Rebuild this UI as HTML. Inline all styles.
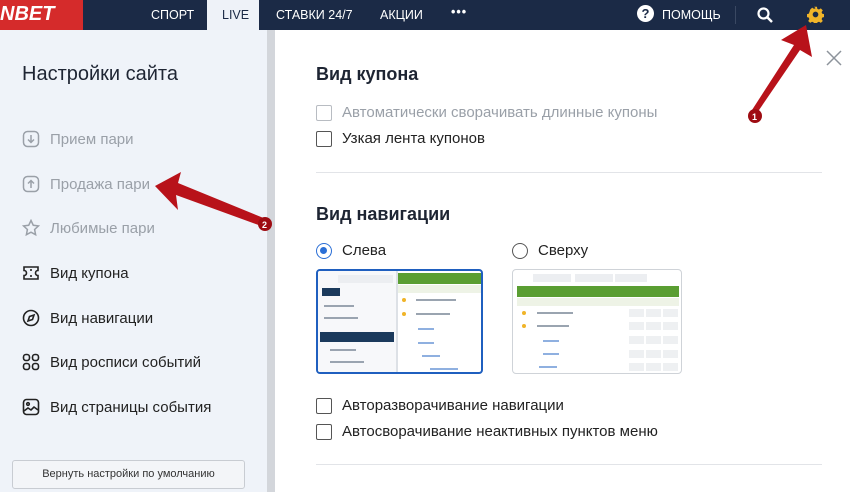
<!DOCTYPE html>
<html><head><meta charset="utf-8"><style>
*{margin:0;padding:0;box-sizing:border-box}
body{width:850px;height:492px;overflow:hidden;font-family:"Liberation Sans",sans-serif;background:#fff;position:relative}
.nav{position:absolute;left:0;top:0;width:850px;height:30px;background:#1b2a46;color:#fff;font-size:12.5px}
.nav span{position:absolute;top:8px}
.logo{position:absolute;left:0;top:0;width:83px;height:30px;background:#d52b2b;color:#fff;font-weight:bold;font-style:italic;font-size:20px;padding:3px 0 0 0}
.live{position:absolute;left:207px;top:0;width:52px;height:31px;background:#eef2f8;color:#1b2a46}
.left{position:absolute;left:0;top:30px;width:267px;height:462px;background:#eff3f9}
.sep{position:absolute;left:267px;top:30px;width:8px;height:462px;background:#d3d6db}
.item{position:absolute;left:22px;font-size:15px;color:#222;display:flex;align-items:center}
.item svg{margin-right:10px}
.dim{color:#9aa0a8}
.h{position:absolute;left:316px;font-size:18px;font-weight:bold;color:#1e2533}
.cb{position:absolute;left:316px;font-size:15px;color:#222;display:flex;align-items:center}
.cb i{display:inline-block;width:16px;height:16px;border:1.5px solid #555;border-radius:2px;margin-right:10px}
.hr{position:absolute;left:316px;width:506px;height:1px;background:#e2e4e8}
.rad{position:absolute;font-size:15px;color:#222;display:flex;align-items:center}
.rad i{display:inline-block;width:16px;height:16px;border-radius:50%;border:1.5px solid #555;margin-right:10px;position:relative}
.prev{position:absolute;background:#fff;border-radius:4px;overflow:hidden}
.prev b{position:absolute;display:block}
.ln{height:2px;background:#9aa4b0}
.bl{height:2px;background:#8fb0e0}
.dt{width:4px;height:4px;border-radius:50%;background:#f0b429}
.od{width:15px;height:8px;background:#eef0f2}
</style></head><body>
<div class="nav">
<div class="logo">NBET</div>
<span style="left:151px">СПОРТ</span>
<div class="live"><span style="left:15px;top:8px">LIVE</span></div>
<span style="left:276px">СТАВКИ 24/7</span>
<span style="left:380px">АКЦИИ</span>
<span style="left:451px;top:5px;font-weight:bold;letter-spacing:1px">•••</span>
<span style="left:637px;top:5px;width:17px;height:17px;border-radius:50%;background:#fff;color:#1b2a46;font-weight:bold;text-align:center;line-height:17px;font-size:13px">?</span>
<span style="left:662px">ПОМОЩЬ</span>
<div style="position:absolute;left:735px;top:6px;width:1px;height:18px;background:#3a4862"></div>
<svg style="position:absolute;left:756px;top:6px" width="18" height="18" viewBox="0 0 18 18"><circle cx="7.5" cy="7.5" r="5" fill="none" stroke="#fff" stroke-width="2.2"/><path d="M11 11l5 5" stroke="#fff" stroke-width="2.5"/></svg>
<svg style="position:absolute;left:807px;top:6px" width="17" height="17" viewBox="0 0 24 24"><path fill="#f0b429" d="M10 1h4l.6 3 2.3 1 2.6-1.7 2.8 2.8-1.7 2.6 1 2.3 3 .6v4l-3 .6-1 2.3 1.7 2.6-2.8 2.8-2.6-1.7-2.3 1-.6 3h-4l-.6-3-2.3-1-2.6 1.7-2.8-2.8 1.7-2.6-1-2.3-3-.6v-4l3-.6 1-2.3L4.5 5.1l2.8-2.8 2.6 1.7 2.3-1z"/><circle cx="12" cy="12" r="4" fill="#1b2a46"/></svg>
</div>
<div class="left">
<div style="position:absolute;left:22px;top:33px;font-size:20px;color:#1e2533;font-weight:500">Настройки сайта</div>
<div class="item dim" style="top:100px"><svg width="18" height="18" viewBox="0 0 18 18" fill="none" stroke="#9aa0a8" stroke-width="1.5"><rect x="1.5" y="1.5" width="15" height="15" rx="4"/><path d="M9 5v7M6 9.5l3 3 3-3"/></svg>Прием пари</div>
<div class="item dim" style="top:145px"><svg width="18" height="18" viewBox="0 0 18 18" fill="none" stroke="#9aa0a8" stroke-width="1.5"><rect x="1.5" y="1.5" width="15" height="15" rx="4"/><path d="M9 13V6M6 8.5l3-3 3 3"/></svg>Продажа пари</div>
<div class="item dim" style="top:189px"><svg width="18" height="18" viewBox="0 0 18 18" fill="none" stroke="#9aa0a8" stroke-width="1.5"><path d="M9 1.5l2.3 4.8 5.2.6-3.9 3.6 1 5.2L9 13.2l-4.6 2.5 1-5.2L1.5 6.9l5.2-.6z"/></svg>Любимые пари</div>
<div class="item" style="top:234px"><svg width="18" height="18" viewBox="0 0 18 18" fill="none" stroke="#222" stroke-width="1.6"><path d="M2 3h14v3.5a2.5 2.5 0 000 5V15H2v-3.5a2.5 2.5 0 000-5z"/><path d="M9 5v2M9 11v2"/></svg>Вид купона</div>
<div class="item" style="top:279px"><svg width="18" height="18" viewBox="0 0 18 18" fill="none" stroke="#222" stroke-width="1.6"><circle cx="9" cy="9" r="7.5"/><path d="M12 6l-1.5 4.5L6 12l1.5-4.5z"/></svg>Вид навигации</div>
<div class="item" style="top:323px"><svg width="18" height="18" viewBox="0 0 18 18" fill="none" stroke="#222" stroke-width="1.6"><rect x="1.5" y="1.5" width="6" height="6" rx="2.5"/><rect x="10.5" y="1.5" width="6" height="6" rx="2.5"/><rect x="1.5" y="10.5" width="6" height="6" rx="2.5"/><rect x="10.5" y="10.5" width="6" height="6" rx="2.5"/></svg>Вид росписи событий</div>
<div class="item" style="top:368px"><svg width="18" height="18" viewBox="0 0 18 18" fill="none" stroke="#222" stroke-width="1.6"><rect x="1.5" y="1.5" width="15" height="15" rx="3"/><circle cx="6" cy="6" r="1.3"/><path d="M2 13l4-3 3 2 3-3 4 3"/></svg>Вид страницы события</div>
<div style="position:absolute;left:12px;top:430px;width:233px;height:29px;border:1px solid #c8ccd2;border-radius:3px;background:#f3f5f8;font-size:11px;color:#333;text-align:center;line-height:27px">Вернуть настройки по умолчанию</div>
</div>
<div class="sep"></div>
<svg style="position:absolute;left:826px;top:50px" width="16" height="16" viewBox="0 0 16 16"><path d="M1 1l14 14M15 1L1 15" stroke="#8d939b" stroke-width="1.5"/></svg>
<div class="h" style="top:64px">Вид купона</div>
<div class="cb" style="top:104px;color:#9aa0a8"><i style="border-color:#b8bcc2"></i>Автоматически сворачивать длинные купоны</div>
<div class="cb" style="top:130px"><i></i>Узкая лента купонов</div>
<div class="hr" style="top:172px"></div>
<div class="h" style="top:204px">Вид навигации</div>
<div class="rad" style="left:316px;top:242px"><i style="border-color:#2b6fd6"><b style="position:absolute;left:3px;top:3px;width:7px;height:7px;border-radius:50%;background:#2b6fd6"></b></i>Слева</div>
<div class="rad" style="left:512px;top:242px"><i></i>Сверху</div>
<div class="prev" style="left:316px;top:269px;width:167px;height:105px;border:2px solid #1f5fbf">
 <b style="left:0;top:0;width:78px;height:105px;background:#f7f8fa"></b>
 <b style="left:20px;top:4px;width:55px;height:8px;background:#eceef1"></b>
 <b style="left:4px;top:17px;width:18px;height:8px;background:#1b3a5c"></b>
 <b class="ln" style="left:6px;top:34px;width:30px"></b>
 <b class="ln" style="left:6px;top:46px;width:34px"></b>
 <b style="left:2px;top:61px;width:74px;height:10px;background:#1b3a5c"></b>
 <b class="ln" style="left:12px;top:78px;width:26px"></b>
 <b class="ln" style="left:12px;top:90px;width:34px"></b>
 <b class="ln" style="left:12px;top:101px;width:30px"></b>
 <b style="left:80px;top:2px;width:87px;height:11px;background:#5a9e32"></b>
 <b style="left:80px;top:14px;width:87px;height:8px;background:#eef3e6"></b>
 <b class="dt" style="left:84px;top:27px"></b><b class="ln" style="left:98px;top:28px;width:40px"></b>
 <b class="dt" style="left:84px;top:41px"></b><b class="ln" style="left:98px;top:42px;width:34px"></b>
 <b class="bl" style="left:100px;top:57px;width:16px"></b>
 <b class="bl" style="left:100px;top:71px;width:16px"></b>
 <b class="bl" style="left:104px;top:84px;width:18px"></b>
 <b class="bl" style="left:112px;top:97px;width:28px"></b>
 <b style="left:78px;top:0;width:2px;height:105px;background:#dde1e6"></b>
</div>
<div class="prev" style="left:512px;top:269px;width:170px;height:105px;border:1.5px solid #cfd3d8">
 <b style="left:20px;top:4px;width:38px;height:8px;background:#eceef1"></b>
 <b style="left:62px;top:4px;width:38px;height:8px;background:#eceef1"></b>
 <b style="left:102px;top:4px;width:32px;height:8px;background:#eceef1"></b>
 <b style="left:4px;top:16px;width:162px;height:11px;background:#5a9e32"></b>
 <b style="left:4px;top:28px;width:162px;height:8px;background:#eef3e6"></b>
 <b class="dt" style="left:9px;top:41px"></b><b class="ln" style="left:24px;top:42px;width:36px"></b>
 <b class="dt" style="left:9px;top:54px"></b><b class="ln" style="left:24px;top:55px;width:32px"></b>
 <b class="bl" style="left:30px;top:70px;width:16px"></b>
 <b class="bl" style="left:30px;top:83px;width:16px"></b>
 <b class="bl" style="left:26px;top:96px;width:18px"></b>
 <b class="od" style="left:116px;top:39px"></b><b class="od" style="left:133px;top:39px"></b><b class="od" style="left:150px;top:39px"></b>
 <b class="od" style="left:116px;top:52px"></b><b class="od" style="left:133px;top:52px"></b><b class="od" style="left:150px;top:52px"></b>
 <b class="od" style="left:116px;top:66px"></b><b class="od" style="left:133px;top:66px"></b><b class="od" style="left:150px;top:66px"></b>
 <b class="od" style="left:116px;top:80px"></b><b class="od" style="left:133px;top:80px"></b><b class="od" style="left:150px;top:80px"></b>
 <b class="od" style="left:116px;top:93px"></b><b class="od" style="left:133px;top:93px"></b><b class="od" style="left:150px;top:93px"></b>
</div>
<div class="cb" style="top:397px"><i></i>Авторазворачивание навигации</div>
<div class="cb" style="top:423px"><i></i>Автосворачивание неактивных пунктов меню</div>
<div class="hr" style="top:464px"></div>
<svg style="position:absolute;left:0;top:0" width="850" height="492">
<path d="M806 25 L812 57 L800 50 L757 113 L752 110 L794 45 L781 40 Z" fill="#b8121a"/>
<circle cx="755" cy="116" r="7" fill="#9e0c12"/><text x="752" y="120" fill="#fff" font-size="9" font-weight="bold" font-family="Liberation Sans">1</text>
<path d="M155 186 L181 172 L178 183 L266 219 L264 227 L176 195 L178 210 Z" fill="#b8121a"/>
<circle cx="265" cy="224" r="7" fill="#9e0c12"/><text x="262" y="228" fill="#fff" font-size="9" font-weight="bold" font-family="Liberation Sans">2</text>
</svg>
</body></html>
